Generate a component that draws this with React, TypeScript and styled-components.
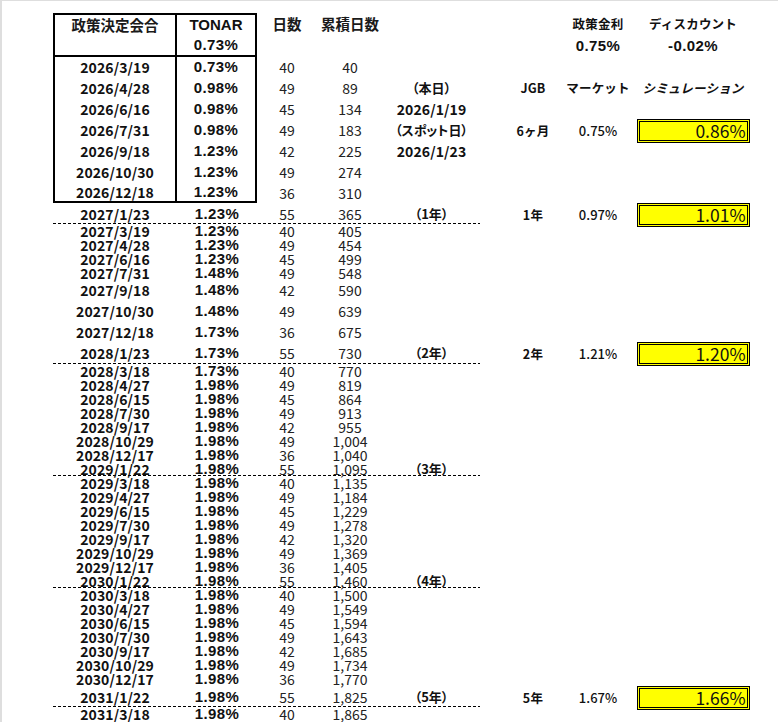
import React from 'react';
import styled, { createGlobalStyle, css } from 'styled-components';

const Global = createGlobalStyle`
  html, body { margin: 0; padding: 0; background: #fff; }
  body { font-family: "Noto Sans CJK JP", "Noto Sans", sans-serif; color: #111; }
`;

const Page = styled.div`
  box-sizing: border-box;
  width: 778px;
  height: 722px;
  overflow: hidden;
  border-top: 1px solid #dedede;
  border-left: 2px solid #dedede;
  padding: 12px 0 0 51px;
`;

const Row = styled.div<{ $h: number }>`
  display: flex;
  height: ${(p) => p.$h}px;
`;

const Left = styled.div<{ $dashed?: boolean }>`
  display: grid;
  grid-template-columns: 124px 80px 60px 66px 97px;
  width: 427px;
  height: 100%;
  ${(p) =>
    p.$dashed &&
    css`
      background-image: repeating-linear-gradient(to right, #000 0 3px, transparent 3px 5px);
      background-size: 100% 1px;
      background-position: left bottom;
      background-repeat: no-repeat;
    `}
`;

const Right = styled.div`
  display: grid;
  grid-template-columns: 66px 64px 126px;
  padding-left: 20px;
  height: 100%;
`;

const Cell = styled.div<{ $top?: boolean; $bottom?: boolean; $l?: boolean; $r?: boolean }>`
  box-sizing: border-box;
  display: flex;
  align-items: center;
  justify-content: center;
  white-space: nowrap;
  overflow: visible;
  line-height: 12px;
  ${(p) => p.$top && 'border-top: 2px solid #000;'}
  ${(p) => p.$bottom && 'border-bottom: 2px solid #000;'}
  ${(p) => p.$l && 'border-left: 2px solid #000;'}
  ${(p) => p.$r && 'border-right: 2px solid #000;'}
`;

const HeadJP = styled.span`
  font-size: 14.5px;
  font-weight: 700;
  color: #1a1a1a;
`;

const HeadLatin = styled.span`
  font-family: "Liberation Sans", "Noto Sans CJK JP", sans-serif;
  font-size: 15px;
  font-weight: 700;
`;

const DateText = styled.span`
  font-size: 14px;
  font-weight: 700;
  letter-spacing: 0.1px;
`;

const Rate = styled.span`
  font-family: "Liberation Sans", "Noto Sans CJK JP", sans-serif;
  font-size: 15px;
  font-weight: 700;
  letter-spacing: 0.4px;
`;

const Num = styled.span`
  font-size: 14px;
  font-weight: 400;
  color: #222;
`;

const Note = styled.span`
  font-size: 13px;
  font-weight: 700;
  font-feature-settings: "palt";
`;

const SmallHead = styled.span<{ $italic?: boolean }>`
  font-size: 12.5px;
  font-weight: 700;
  letter-spacing: 0.2px;
  ${(p) => p.$italic && 'font-style: italic;'}
`;

const Value = styled.span`
  font-size: 13px;
  font-weight: 500;
`;

const SimBox = styled.div`
  box-sizing: border-box;
  width: 113px;
  height: 24px;
  flex: none;
  border: 3px double #000;
  background: #ffff00;
  display: flex;
  align-items: center;
  justify-content: flex-end;
  padding-right: 1px;
  font-size: 17.5px;
  line-height: 18px;
  font-weight: 400;
  color: #111;
`;

type DataRow = {
  h: number;
  date: string;
  rate: string;
  days: string;
  cum: string;
  note?: string;
  noteDate?: boolean;
  jgb?: string;
  mkt?: string;
  sim?: string;
  dashed?: boolean;
  box?: boolean;
  boxEnd?: boolean;
  simHeader?: boolean;
};

const rows: DataRow[] = [
  { h: 20, date: '2026/3/19', rate: '0.73%', days: '40', cum: '40', box: true },
  { h: 21, date: '2026/4/28', rate: '0.98%', days: '49', cum: '89', box: true, note: '（本日）', simHeader: true },
  { h: 21, date: '2026/6/16', rate: '0.98%', days: '45', cum: '134', box: true, note: '2026/1/19', noteDate: true },
  { h: 21, date: '2026/7/31', rate: '0.98%', days: '49', cum: '183', box: true, note: '（スポット日）', jgb: '6ヶ月', mkt: '0.75%', sim: '0.86%' },
  { h: 21, date: '2026/9/18', rate: '1.23%', days: '42', cum: '225', box: true, note: '2026/1/23', noteDate: true },
  { h: 21, date: '2026/10/30', rate: '1.23%', days: '49', cum: '274', box: true },
  { h: 21, date: '2026/12/18', rate: '1.23%', days: '36', cum: '310', box: true, boxEnd: true },
  { h: 21, date: '2027/1/23', rate: '1.23%', days: '55', cum: '365', note: '（1年）', jgb: '1年', mkt: '0.97%', sim: '1.01%', dashed: true },
  { h: 14, date: '2027/3/19', rate: '1.23%', days: '40', cum: '405' },
  { h: 14, date: '2027/4/28', rate: '1.23%', days: '49', cum: '454' },
  { h: 14, date: '2027/6/16', rate: '1.23%', days: '45', cum: '499' },
  { h: 14, date: '2027/7/31', rate: '1.48%', days: '49', cum: '548' },
  { h: 20, date: '2027/9/18', rate: '1.48%', days: '42', cum: '590' },
  { h: 21, date: '2027/10/30', rate: '1.48%', days: '49', cum: '639' },
  { h: 21, date: '2027/12/18', rate: '1.73%', days: '36', cum: '675' },
  { h: 22, date: '2028/1/23', rate: '1.73%', days: '55', cum: '730', note: '（2年）', jgb: '2年', mkt: '1.21%', sim: '1.20%', dashed: true },
  { h: 14, date: '2028/3/18', rate: '1.73%', days: '40', cum: '770' },
  { h: 14, date: '2028/4/27', rate: '1.98%', days: '49', cum: '819' },
  { h: 14, date: '2028/6/15', rate: '1.98%', days: '45', cum: '864' },
  { h: 14, date: '2028/7/30', rate: '1.98%', days: '49', cum: '913' },
  { h: 14, date: '2028/9/17', rate: '1.98%', days: '42', cum: '955' },
  { h: 14, date: '2028/10/29', rate: '1.98%', days: '49', cum: '1,004' },
  { h: 14, date: '2028/12/17', rate: '1.98%', days: '36', cum: '1,040' },
  { h: 14, date: '2029/1/22', rate: '1.98%', days: '55', cum: '1,095', note: '（3年）', dashed: true },
  { h: 14, date: '2029/3/18', rate: '1.98%', days: '40', cum: '1,135' },
  { h: 14, date: '2029/4/27', rate: '1.98%', days: '49', cum: '1,184' },
  { h: 14, date: '2029/6/15', rate: '1.98%', days: '45', cum: '1,229' },
  { h: 14, date: '2029/7/30', rate: '1.98%', days: '49', cum: '1,278' },
  { h: 14, date: '2029/9/17', rate: '1.98%', days: '42', cum: '1,320' },
  { h: 14, date: '2029/10/29', rate: '1.98%', days: '49', cum: '1,369' },
  { h: 14, date: '2029/12/17', rate: '1.98%', days: '36', cum: '1,405' },
  { h: 14, date: '2030/1/22', rate: '1.98%', days: '55', cum: '1,460', note: '（4年）', dashed: true },
  { h: 14, date: '2030/3/18', rate: '1.98%', days: '40', cum: '1,500' },
  { h: 14, date: '2030/4/27', rate: '1.98%', days: '49', cum: '1,549' },
  { h: 14, date: '2030/6/15', rate: '1.98%', days: '45', cum: '1,594' },
  { h: 14, date: '2030/7/30', rate: '1.98%', days: '49', cum: '1,643' },
  { h: 14, date: '2030/9/17', rate: '1.98%', days: '42', cum: '1,685' },
  { h: 14, date: '2030/10/29', rate: '1.98%', days: '49', cum: '1,734' },
  { h: 14, date: '2030/12/17', rate: '1.98%', days: '36', cum: '1,770' },
  { h: 21, date: '2031/1/22', rate: '1.98%', days: '55', cum: '1,825', note: '（5年）', jgb: '5年', mkt: '1.67%', sim: '1.66%', dashed: true },
  { h: 14, date: '2031/3/18', rate: '1.98%', days: '40', cum: '1,865' },
];

function DataLine({ r }: { r: DataRow }) {
  return (
    <Row $h={r.h}>
      <Left $dashed={r.dashed}>
        <Cell $l={r.box} $r={r.box} $bottom={r.boxEnd}>
          <DateText>{r.date}</DateText>
        </Cell>
        <Cell $r={r.box} $bottom={r.boxEnd}>
          <Rate>{r.rate}</Rate>
        </Cell>
        <Cell>
          <Num>{r.days}</Num>
        </Cell>
        <Cell>
          <Num>{r.cum}</Num>
        </Cell>
        <Cell>{r.note && (r.noteDate ? <DateText>{r.note}</DateText> : <Note>{r.note}</Note>)}</Cell>
      </Left>
      <Right>
        {r.simHeader ? (
          <>
            <Cell><SmallHead>JGB</SmallHead></Cell>
            <Cell><SmallHead>マーケット</SmallHead></Cell>
            <Cell><SmallHead $italic>シミュレーション</SmallHead></Cell>
          </>
        ) : (
          <>
            <Cell>{r.jgb && <SmallHead>{r.jgb}</SmallHead>}</Cell>
            <Cell>{r.mkt && <Value>{r.mkt}</Value>}</Cell>
            <Cell>{r.sim && <SimBox>{r.sim}</SimBox>}</Cell>
          </>
        )}
      </Right>
    </Row>
  );
}

export default function App() {
  return (
    <>
      <Global />
      <Page>
        <Row $h={21}>
          <Left>
            <Cell $top $l $r>
              <HeadJP>政策決定会合</HeadJP>
            </Cell>
            <Cell $top $r>
              <HeadLatin>TONAR</HeadLatin>
            </Cell>
            <Cell>
              <HeadJP>日数</HeadJP>
            </Cell>
            <Cell>
              <HeadJP>累積日数</HeadJP>
            </Cell>
            <Cell />
          </Left>
          <Right>
            <Cell />
            <Cell>
              <SmallHead>政策金利</SmallHead>
            </Cell>
            <Cell>
              <SmallHead>ディスカウント</SmallHead>
            </Cell>
          </Right>
        </Row>
        <Row $h={23}>
          <Left>
            <Cell $l $r $bottom />
            <Cell $r $bottom>
              <Rate>0.73%</Rate>
            </Cell>
            <Cell />
            <Cell />
            <Cell />
          </Left>
          <Right>
            <Cell />
            <Cell>
              <Rate>0.75%</Rate>
            </Cell>
            <Cell>
              <Rate>-0.02%</Rate>
            </Cell>
          </Right>
        </Row>
        {rows.map((r) => (
          <DataLine key={r.date} r={r} />
        ))}
      </Page>
    </>
  );
}
